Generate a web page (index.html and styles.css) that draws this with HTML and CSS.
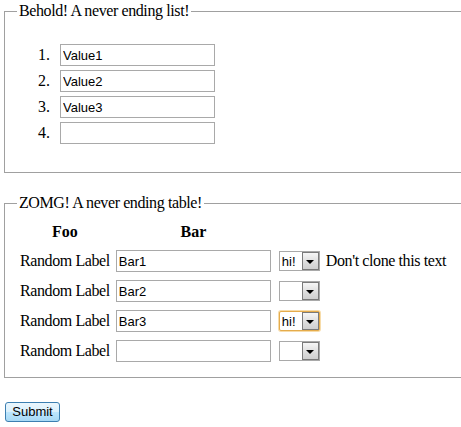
FILE: index.html
```html
<!DOCTYPE html>
<html>
<head>
<meta charset="utf-8">
<link rel="stylesheet" href="styles.css">
</head>
<body>
<form class="page">
  <fieldset class="group group-list">
    <legend class="group-title">Behold! A never ending list!</legend>
    <ol class="value-list">
      <li class="value-item"><input class="text-field" type="text" value="Value1"></li>
      <li class="value-item"><input class="text-field" type="text" value="Value2"></li>
      <li class="value-item"><input class="text-field" type="text" value="Value3"></li>
      <li class="value-item"><input class="text-field" type="text" value=""></li>
    </ol>
  </fieldset>

  <fieldset class="group group-table">
    <legend class="group-title">ZOMG! A never ending table!</legend>
    <table class="grid">
      <thead>
        <tr>
          <th class="col-foo">Foo</th>
          <th class="col-bar">Bar</th>
          <th class="col-extra"></th>
        </tr>
      </thead>
      <tbody>
        <tr>
          <td class="col-foo">Random Label</td>
          <td class="col-bar"><input class="text-field" type="text" value="Bar1"></td>
          <td class="col-extra"><span class="dropdown"><select class="dropdown-select"><option>hi!</option><option></option></select><span class="dropdown-btn"><span class="dropdown-tri"></span></span></span><span class="note">Don't clone this text</span></td>
        </tr>
        <tr>
          <td class="col-foo">Random Label</td>
          <td class="col-bar"><input class="text-field" type="text" value="Bar2"></td>
          <td class="col-extra"><span class="dropdown"><select class="dropdown-select"><option></option><option>hi!</option></select><span class="dropdown-btn"><span class="dropdown-tri"></span></span></span></td>
        </tr>
        <tr>
          <td class="col-foo">Random Label</td>
          <td class="col-bar"><input class="text-field" type="text" value="Bar3"></td>
          <td class="col-extra"><span class="dropdown"><select class="dropdown-select is-focused"><option>hi!</option><option></option></select><span class="dropdown-btn"><span class="dropdown-tri"></span></span></span></td>
        </tr>
        <tr>
          <td class="col-foo">Random Label</td>
          <td class="col-bar"><input class="text-field" type="text" value=""></td>
          <td class="col-extra"><span class="dropdown"><select class="dropdown-select"><option></option><option>hi!</option></select><span class="dropdown-btn"><span class="dropdown-tri"></span></span></span></td>
        </tr>
      </tbody>
    </table>
  </fieldset>

  <div class="actions">
    <button class="submit-btn" type="button">Submit</button>
  </div>
</form>
</body>
</html>
```
FILE: styles.css
```css
html {
  overflow: hidden;
  background: #ffffff;
}

body {
  margin: 2px 0 0 4px;
  font-family: "Liberation Serif", "Times New Roman", serif;
  font-size: 16px;
  letter-spacing: -0.4px;
  color: #000000;
}

.page {
  margin: 0;
}

.group {
  margin: 0 -20px 0 0;
  padding: 0 0 0 15px;
  border: 1px solid #a0a0a0;
  min-width: 0;
}

.group-title {
  padding: 0 2px;
  margin-left: -3px;
  line-height: 18px;
  font-size: 16px;
}

.group-list {
  padding-bottom: 28px;
}

.value-list {
  list-style: none;
  margin: 24px 0 0 0;
  padding: 0;
  counter-reset: item;
}

.value-item {
  display: flex;
  align-items: center;
  height: 22px;
  counter-increment: item;
}

.value-item + .value-item {
  margin-top: 4px;
}

.value-item::before {
  content: counter(item) ".";
  display: inline-block;
  width: 30px;
  margin-right: 10px;
  text-align: right;
  line-height: 18px;
  letter-spacing: 0;
}

.text-field {
  box-sizing: border-box;
  width: 155px;
  height: 22px;
  margin: 0;
  padding: 0 2px;
  border: 1px solid #a9a9a9;
  font-family: "Liberation Sans", Arial, sans-serif;
  font-size: 13px;
  letter-spacing: 0;
  color: #000000;
  background: #ffffff;
  outline: none;
}

.group-table {
  margin-top: 21px;
  padding-bottom: 11px;
}

.grid {
  border-collapse: collapse;
  border-spacing: 0;
  margin-top: 11px;
}

.grid th {
  font-weight: bold;
  text-align: center;
  padding: 0 0 5px 0;
  line-height: 18px;
  height: 18px;
  letter-spacing: 0;
}

.grid td {
  padding: 4px 0;
  line-height: 18px;
  vertical-align: middle;
  white-space: nowrap;
}

.grid td.col-foo,
.grid th.col-foo {
  padding-right: 6px;
}

.grid td.col-bar,
.grid th.col-bar {
  padding-right: 8px;
}

.grid td .text-field {
  display: block;
}

.col-extra {
  text-align: left;
}

.dropdown {
  position: relative;
  display: inline-block;
  vertical-align: middle;
  width: 41px;
  height: 20px;
}

.dropdown-select {
  -webkit-appearance: none;
  appearance: none;
  box-sizing: border-box;
  display: block;
  width: 41px;
  height: 20px;
  margin: 0;
  padding: 0 0 0 2px;
  border: 1px solid #a9a9a9;
  border-radius: 0;
  background: #ffffff;
  font-family: "Liberation Sans", Arial, sans-serif;
  font-size: 13px;
  letter-spacing: 0;
  color: #000000;
  outline: none;
}

.dropdown-select.is-focused {
  border-color: #e5ac4c;
  border-radius: 2px;
  box-shadow: 0 0 0 1px #f7dcaa;
}

.dropdown-btn {
  position: absolute;
  top: 1px;
  right: 1px;
  bottom: 1px;
  width: 17px;
  box-sizing: border-box;
  border: 1px solid #7a7a7a;
  background: linear-gradient(#f6f6f6, #dcdcdc 60%, #cfcfcf);
  display: flex;
  align-items: center;
  justify-content: center;
  pointer-events: none;
}

.dropdown-tri {
  width: 0;
  height: 0;
  border-left: 4px solid transparent;
  border-right: 4px solid transparent;
  border-top: 4px solid #000000;
  margin-top: 1px;
}

.note {
  display: inline-block;
  vertical-align: middle;
  margin-left: 6px;
}

.actions {
  margin-top: 24px;
  padding-left: 1px;
}

.submit-btn {
  box-sizing: border-box;
  width: 55px;
  height: 20px;
  margin: 0;
  padding: 0;
  border: 1px solid #3c7fb1;
  border-radius: 3px;
  background: linear-gradient(#eaf6fd 0%, #d9f0fc 50%, #bee6fd 50%, #a7d9f5 100%);
  font-family: "Liberation Sans", Arial, sans-serif;
  font-size: 13px;
  letter-spacing: 0;
  color: #000000;
  line-height: 16px;
}
```
